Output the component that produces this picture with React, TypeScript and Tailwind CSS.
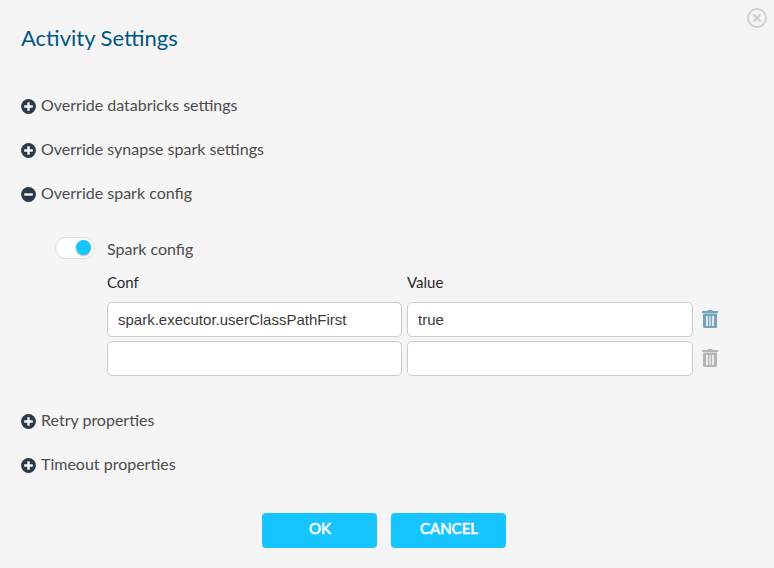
import React from "react";

function Toggle({ open = false }: { open?: boolean }) {
  return (
    <svg className="mt-px size-[15px] shrink-0" viewBox="0 0 15 15">
      <circle cx="7.5" cy="7.5" r="7.4" fill="#2a3a4b" />
      <path d={open ? "M3.2 7.5h8.6" : "M3.2 7.5h8.6M7.5 3.2v8.6"} stroke="#f5f5f5" strokeWidth="2.4" />
    </svg>
  );
}

function Section({ label, open }: { label: string; open?: boolean }) {
  return (
    <button className="flex h-6 items-center gap-[5px] text-left text-base text-[#4c4c4c]">
      <Toggle open={open} />
      <span className="-mt-0.5">{label}</span>
    </button>
  );
}

function Trash({ className }: { className: string }) {
  return (
    <svg className={`mb-0.5 h-[18px] w-4 ${className}`} viewBox="0 0 16 18" fill="currentColor">
      <path d="M0 1h5.2Q5.4 0 6.4 0h3.2q1 0 1.2 1H16v2H0z" />
      <path d="M1 3h14v1H1z" opacity="0.5" />
      <path d="M1 4h14v12.5q0 1.500-1.500 1.500h-11Q1 18 1 16.500z" />
      <path d="M5 6v10M11 6v10" stroke="#f5f5f5" strokeWidth="1.700" />
      <path d="M8 6v10" stroke="#f5f5f5" strokeWidth="2" opacity="0.6" />
    </svg>
  );
}

const field = "h-[35px] rounded-[5px] border border-[#ccc] bg-white px-2.5 font-['Liberation_Sans',sans-serif] text-[15px] text-[#3a3a3a] outline-none";

function Row({ conf, value, trash }: { conf: string; value: string; trash: string }) {
  return (
    <div className="flex items-center">
      <input className={`${field} mr-[5px] w-[295px]`} defaultValue={conf} />
      <input className={`${field} mr-[9px] w-[286px]`} defaultValue={value} />
      <Trash className={trash} />
    </div>
  );
}

export default function App() {
  return (
    <div className="h-[568px] w-[774px] overflow-hidden bg-[#f5f5f5] font-['Lato',sans-serif] antialiased">
      <header className="flex h-[94px] items-start justify-between pl-[21px] pr-[7px]">
        <h1 className="mt-[22px] text-[22px] leading-8 text-[#005587]">Activity Settings</h1>
        <svg className="mt-2 size-5" viewBox="0 0 20 20" fill="none" stroke="#d0d0d0" strokeWidth="2">
          <circle cx="10" cy="10" r="9" />
          <path d="m6.500 6.500 7 7m0-7-7 7" strokeWidth="2.400" />
        </svg>
      </header>
      <main className="flex flex-col pl-[21px]">
        <div className="flex flex-col gap-5">
          <Section label="Override databricks settings" />
          <Section label="Override synapse spark settings" />
          <Section label="Override spark config" open />
        </div>
        <div className="mt-[31px] flex pl-[34px]">
          <div className="flex h-[22px] w-10 items-center justify-end rounded-full border border-[#e0e0e0] bg-white pr-[3px] pb-px">
            <div className="size-[15px] rounded-full bg-[#16c4ff] shadow-[0_1px_2px_rgba(0,0,0,0.3)]" />
          </div>
          <div className="ml-3">
            <div className="h-6 text-base leading-6 text-[#4c4c4c]">Spark config</div>
            <div className="mt-[9px] flex h-6 text-[15px] leading-6 text-[#282828]">
              <span className="w-[300px]">Conf</span>
              <span>Value</span>
            </div>
            <div className="mt-2 flex flex-col gap-1">
              <Row conf="spark.executor.userClassPathFirst" value="true" trash="text-[#76a3bb]" />
              <Row conf="" value="" trash="text-[#b5b5b5]" />
            </div>
          </div>
        </div>
        <div className="mt-[33px] flex flex-col gap-5">
          <Section label="Retry properties" />
          <Section label="Timeout properties" />
        </div>
      </main>
      <footer className="mt-9 flex gap-3.5 pl-[262px] text-[15px] text-white [-webkit-text-stroke:0.6px_white]">
        <button className="h-[35px] w-[115px] rounded bg-[#16c4ff] pb-1 pl-px">OK</button>
        <button className="h-[35px] w-[115px] rounded bg-[#16c4ff] pb-1 pl-px">CANCEL</button>
      </footer>
    </div>
  );
}
